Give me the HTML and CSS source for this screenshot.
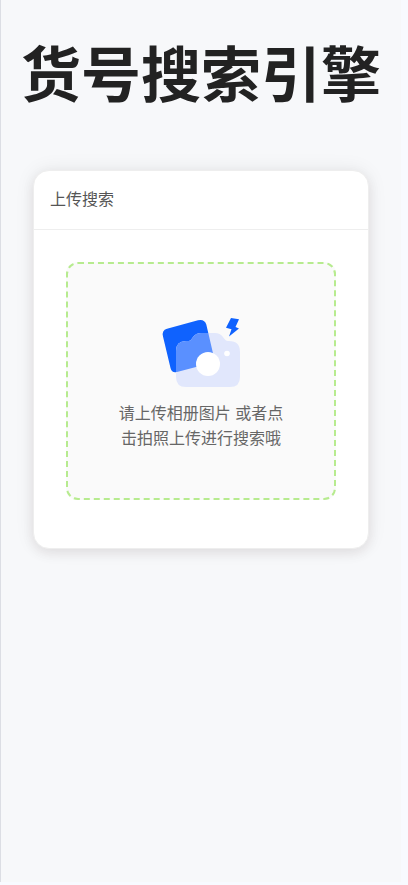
FILE: index.html
```html
<!DOCTYPE html>
<html lang="zh-CN">
<head>
<meta charset="utf-8">
<meta name="viewport" content="width=device-width, initial-scale=1">
<title>货号搜索引擎</title>
<link rel="stylesheet" href="styles.css">
</head>
<body>
<main class="page">
  <h1 class="title">货号搜索引擎</h1>
  <section class="card">
    <h2 class="card-header">上传搜索</h2>
    <div class="card-body">
      <label class="dropzone">
        <input class="file-input" type="file" accept="image/*">
        <svg class="camera" viewBox="0 0 82 72" aria-hidden="true">
          <path d="M7 10.800L38 2.300Q44.500 .8 46.300 6.500L55 44L17 54Q12 55.500 10.500 50L3 18.500Q1.500 12.300 7 10.800Z" fill="#0f62fe"/>
          <path d="M26 23H27.500C31 23 31 21.500 33 19Q36 15 41 15H55Q60 15 63 19C65 21.500 65.500 23 69 23Q80 23 80 34V59Q80 69 70 69H26Q16 69 16 59V33Q16 23 26 23Z" fill="#e1e7fc"/>
          <path d="M26 23H27.500C31 23 31 21.500 33 19Q36 15 41 15H48.300L55 44L17 54L16 53.900V33Q16 23 26 23Z" fill="#5a90ff"/>
          <circle cx="48" cy="46" r="12" fill="#fff"/>
          <circle cx="67" cy="35.500" r="2.800" fill="#fff"/>
          <path d="M71 0L79 1.300L75.500 9L79 10.500L69 18.500L71.500 11.200L66 9.800Z" fill="#0f62fe"/>
        </svg>
        <span class="hint">请上传相册图片 或者点击拍照上传进行搜索哦</span>
      </label>
    </div>
  </section>
</main>
</body>
</html>
```
FILE: styles.css
```css
* {
  box-sizing: border-box;
}

body {
  margin: 0;
  min-height: 100vh;
  display: flex;
  padding: 0 7px 3px 0;
  background: #f8faff;
  font-family: "Liberation Sans", "Noto Sans CJK SC", sans-serif;
  color: #555;
}

.page {
  flex: 1;
  min-width: 0;
  padding: 32px;
  border-left: 1px solid #dcdee4;
  background: #f7f8fa;
}

.title {
  margin: 0 -32px 48px;
  font-size: 60px;
  line-height: 90px;
  font-weight: 700;
  text-align: center;
  white-space: nowrap;
  color: #222;
}

.card {
  border: 1px solid #eee;
  border-radius: 16px;
  background: #fff;
  box-shadow: 0 0 20px rgba(0, 0, 0, 0.07), 0 4px 12px rgba(60, 20, 20, 0.08);
}

.card-header {
  margin: 0;
  padding: 16px;
  border-bottom: 1px solid #eee;
  font-size: 16px;
  line-height: 26px;
  font-weight: 400;
}

.card-body {
  padding: 32px 32px 48px;
}

.dropzone {
  display: flex;
  flex-direction: column;
  align-items: center;
  padding: 54px 48px 47px;
  border: 2px dashed #b7eb8f;
  border-radius: 12px;
  background: #fafafa;
  cursor: pointer;
}

.file-input {
  position: absolute;
  width: 1px;
  height: 1px;
  opacity: 0;
}

.camera {
  width: 82px;
  height: 72px;
  margin-bottom: 11px;
}

.hint {
  font-size: 16px;
  line-height: 25px;
  text-align: center;
  color: #666;
}
```
